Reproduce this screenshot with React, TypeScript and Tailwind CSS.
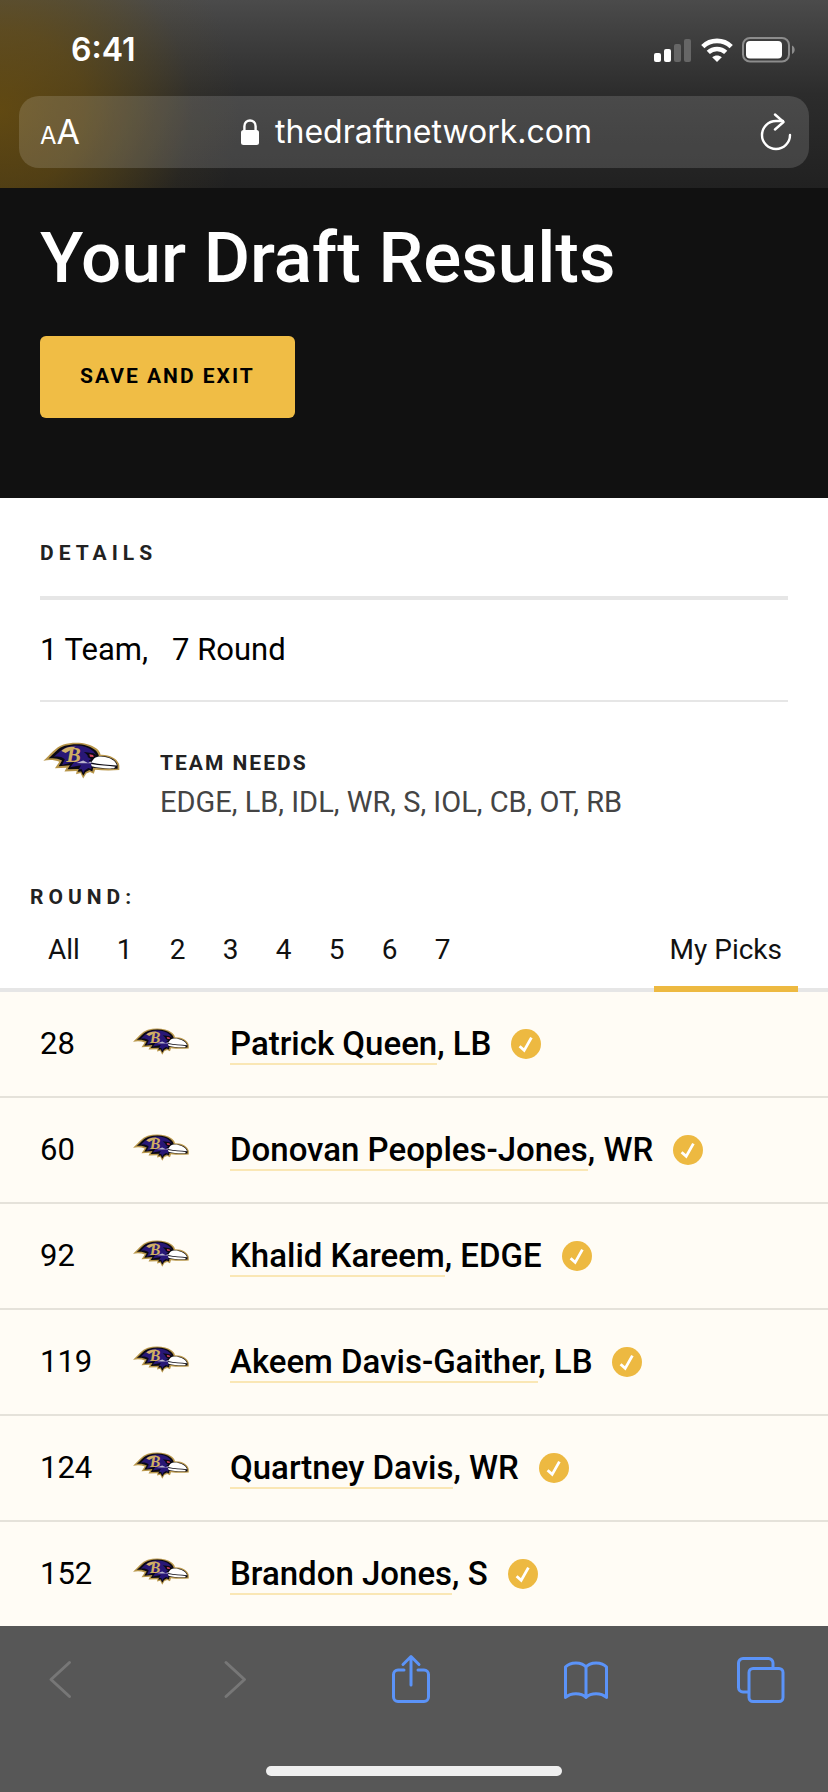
import React from "react";

type Pick = { pick: number; name: string; position: string };

const picks: Pick[] = [
  { pick: 28, name: "Patrick Queen", position: "LB" },
  { pick: 60, name: "Donovan Peoples-Jones", position: "WR" },
  { pick: 92, name: "Khalid Kareem", position: "EDGE" },
  { pick: 119, name: "Akeem Davis-Gaither", position: "LB" },
  { pick: 124, name: "Quartney Davis", position: "WR" },
  { pick: 152, name: "Brandon Jones", position: "S" },
];

const rounds = ["1", "2", "3", "4", "5", "6", "7"];

function RavenLogo({ className }: { className: string }) {
  return (
    <svg viewBox="0 0 226 108" className={className} role="img" aria-label="Baltimore Ravens">
      <path
        d="M1 55C22 36 36 15 60 7C92-2 134 1 157 19C165 25 168 32 169 37C197 36 221 50 224 68L224 82C200 84 176 84 153 81L149 93L138 88L127 92L118 107L110 91L97 94L99 85L63 86L69 75L35 77L48 58C34 52 18 51 1 55Z"
        fill="#b8964a"
      />
      <path
        d="M16 48C34 33 44 17 64 11C96 2 131 5 153 23C160 29 163 36 164 41C194 40 216 52 219 69L219 78C196 79 172 78 147 75L145 86L136 82L125 88L118 99L112 86L102 87L105 79L72 80L79 68L46 71L56 54C42 47 30 46 16 48Z"
        fill="#0b0912"
      />
      <path
        d="M32 43C46 31 54 20 70 15C98 6 128 10 148 27L158 40L140 37L130 43L142 50L134 54L142 60L142 79L133 76L122 83L118 91L114 80L105 80L112 68L80 74L92 58L56 67L64 50C54 42 44 41 32 43Z"
        fill="#281776"
      />
      <path d="M98 61L118 54L132 61L140 57L142 62L114 62Z" fill="#b9b4cc" />
      <path d="M120 29L148 33L162 41L150 47L134 44L128 36Z" fill="#0b0912" />
      <path d="M136 36L147 38L149 44L138 43Z" fill="#d8475e" />
      <path d="M150 48C158 42 170 41 182 44C202 48 214 57 217 69C192 66 168 66 141 60Z" fill="#ffffff" />
      <path d="M141 64C168 69 190 69 213 72L208 77C186 78 162 76 143 71Z" fill="#ffffff" />
      <path d="M54 26C66 15 76 13 96 14L84 22L66 32Z" fill="#d2b26a" />
      <text
        x="68"
        y="58"
        fontFamily="Liberation Serif, serif"
        fontSize="64"
        fontWeight="700"
        fontStyle="italic"
        fill="#cfae62"
      >
        B
      </text>
    </svg>
  );
}

function CheckBadge() {
  return (
    <svg viewBox="0 0 30 30" className="size-[30px] shrink-0" role="img" aria-label="Your pick">
      <circle cx="15" cy="15" r="15" fill="#edb941" />
      <path d="M8.6 17.2L13.2 21.4L20.4 8.6" fill="none" stroke="#fff" strokeWidth="2.8" />
    </svg>
  );
}

function StatusBar() {
  return (
    <div className="flex h-24 items-center justify-between pt-1 pr-8 pl-[71px]">
      <span className="text-[32px] leading-10 font-semibold">6:41</span>
      <div className="flex items-center gap-[9px]">
        <svg viewBox="0 0 38 24" className="h-6 w-[38px]" aria-hidden="true">
          <rect x="0" y="15" width="7" height="9" rx="2" fill="#fff" />
          <rect x="10" y="11" width="7" height="13" rx="2" fill="#fff" />
          <rect x="20" y="6" width="7" height="18" rx="2" fill="#666" />
          <rect x="30" y="1" width="7" height="23" rx="2" fill="#666" />
        </svg>
        <svg viewBox="0 0 32 24" className="h-6 w-8" aria-hidden="true" fill="none" stroke="#fff" strokeWidth="4.6">
          <path d="M1.8 8.6C9.6 0.9 22.4 0.9 30.2 8.6" />
          <path d="M7.3 14.4C12.2 9.8 19.8 9.8 24.7 14.4" />
          <path d="M16 24L11.2 19.2C14 17 18 17 20.8 19.2Z" fill="#fff" stroke="none" />
        </svg>
        <svg viewBox="0 0 54 26" className="h-[26px] w-[54px]" aria-hidden="true">
          <rect x="1" y="1" width="46" height="23.5" rx="7" fill="none" stroke="#8c8c8c" strokeWidth="2" />
          <rect x="4" y="4" width="36" height="17.5" rx="4" fill="#fff" />
          <path d="M50 8.6C53.6 10.2 53.6 15.4 50 17Z" fill="#8c8c8c" />
        </svg>
      </div>
    </div>
  );
}

function BrowserHeader() {
  return (
    <header className="bg-linear-to-b from-[#4b4b4b] via-[#2c2c2c] via-50% to-[#212121] font-[Inter,sans-serif] text-white">
      <div className="bg-[radial-gradient(ellipse_240px_230px_at_0px_110px,rgba(120,86,8,0.7)_0%,rgba(112,82,12,0.6)_35%,rgba(104,80,18,0.42)_55%,rgba(96,78,30,0.1)_80%,transparent_100%)] pb-5">
        <StatusBar />
        <div className="mx-[19px] flex h-[72px] items-center justify-between rounded-[20px] bg-white/[0.14] pr-4 pl-[21px]">
          <button type="button" aria-label="Page settings" className="flex w-12 items-baseline pt-1">
            <span className="text-2xl leading-10">A</span>
            <span className="text-[34px] leading-10">A</span>
          </button>
          <button type="button" className="flex items-center gap-4">
            <svg viewBox="0 0 18 26" className="h-[26px] w-[18px]" aria-hidden="true">
              <rect x="0" y="11" width="18" height="15" rx="2.5" fill="#fff" />
              <path d="M3.4 12V7.2C3.4-0.4 14.6-0.4 14.6 7.2V12" fill="none" stroke="#fff" strokeWidth="2.4" />
            </svg>
            <span className="text-[32px] leading-10">thedraftnetwork.com</span>
          </button>
          <button type="button" aria-label="Reload" className="flex w-12 justify-end">
            <svg viewBox="0 0 34 38" className="h-[38px] w-[34px]" fill="none" stroke="#fff" strokeWidth="2.4" strokeLinecap="round" strokeLinejoin="round" aria-hidden="true">
              <path d="M31 22A14 14 0 1 1 17 8H24" />
              <path d="M16 1.500L24.500 9L16 16.500" />
            </svg>
          </button>
        </div>
      </div>
    </header>
  );
}

function BrowserToolbar() {
  return (
    <footer className="flex flex-col items-center bg-[#575757] pt-7">
      <nav
        aria-label="Browser"
        className="flex w-full items-center justify-between pr-[42px] pl-[35px] text-[#5b93f8]"
      >
        <button type="button" aria-label="Back" disabled className="flex w-[50px] justify-center text-[#777]">
          <svg viewBox="0 0 30 50" className="h-[50px] w-[30px]" fill="none" stroke="currentColor" strokeWidth="3" strokeLinecap="round" strokeLinejoin="round" aria-hidden="true">
            <path d="M24.500 8.500L6 25.500L24.500 42.500" />
          </svg>
        </button>
        <button type="button" aria-label="Forward" disabled className="flex w-[50px] justify-center text-[#777]">
          <svg viewBox="0 0 30 50" className="h-[50px] w-[30px]" fill="none" stroke="currentColor" strokeWidth="3" strokeLinecap="round" strokeLinejoin="round" aria-hidden="true">
            <path d="M6 8.500L24.500 25.500L6 42.500" />
          </svg>
        </button>
        <button type="button" aria-label="Share" className="flex w-[50px] justify-center">
          <svg viewBox="0 0 40 50" className="h-[50px] w-10" fill="none" stroke="currentColor" strokeWidth="3" strokeLinecap="round" strokeLinejoin="round" aria-hidden="true">
            <path d="M13 16H7A4.500 4.500 0 0 0 2.500 20.500V43A4.500 4.500 0 0 0 7 47.500H33A4.500 4.500 0 0 0 37.500 43V20.500A4.500 4.500 0 0 0 33 16H27" />
            <path d="M20 31V3M12 10.500L20 2.500L28 10.500" />
          </svg>
        </button>
        <button type="button" aria-label="Bookmarks" className="flex w-[50px] justify-center">
          <svg viewBox="0 0 46 50" className="h-[50px] w-[46px]" fill="none" stroke="currentColor" strokeWidth="3" strokeLinecap="round" strokeLinejoin="round" aria-hidden="true">
            <path d="M23 13C19 7.500 7 7.500 2.500 13V43.500C8 38.500 18 38.500 23 43.500C28 38.500 38 38.500 43.500 43.500V13C39 7.500 27 7.500 23 13ZM23 13V43" />
          </svg>
        </button>
        <button type="button" aria-label="Tabs" className="flex w-[50px] justify-center">
          <svg viewBox="0 0 48 50" className="h-[50px] w-12" fill="none" stroke="currentColor" strokeWidth="3" aria-hidden="true">
            <rect x="12" y="14.500" width="34" height="33" rx="4" />
            <path d="M36 14V9A4.500 4.500 0 0 0 31.500 4.500H6A4.500 4.500 0 0 0 1.500 9V33.500A4.500 4.500 0 0 0 6 38H12" />
          </svg>
        </button>
      </nav>
      <div className="mt-[62px] mb-4 h-[10px] w-[296px] rounded-full bg-[#efefef]" />
    </footer>
  );
}

function RoundTabs() {
  return (
    <nav
      aria-label="Round"
      className="flex justify-between border-b-4 border-[#e6e6e6] px-[30px] text-[28px] leading-9 text-[#111]"
    >
      <div className="flex">
        <button type="button" className="w-[68px] pb-5">
          All
        </button>
        {rounds.map((r) => (
          <button key={r} type="button" className="w-[53px] pb-5">
            {r}
          </button>
        ))}
      </div>
      <button type="button" aria-current="page" className="-mb-1 border-b-6 border-[#edb941] px-4 pb-[18px]">
        My Picks
      </button>
    </nav>
  );
}

export default function App() {
  return (
    <div className="flex min-h-screen flex-col bg-white font-[Roboto,sans-serif] text-black">
      <BrowserHeader />
      <main className="flex-1">
        <section className="bg-[#111] px-10 pt-7 pb-20 text-white">
          <h1 className="text-[71px] leading-[84px] font-medium">Your Draft Results</h1>
          <button
            type="button"
            className="mt-9 h-[82px] rounded-md bg-[#f0bd45] px-10 text-[21px] font-bold tracking-[2px] text-black"
          >
            SAVE AND EXIT
          </button>
        </section>

        <section className="px-10 pt-10">
          <h2 className="border-b-4 border-[#e6e6e6] pb-7 text-[21px] leading-[30px] font-bold tracking-[5px] text-[#222]">
            DETAILS
          </h2>
          <p className="flex gap-6 border-b-2 border-[#e6e6e6] py-8 text-[31px] leading-9">
            <span>1 Team,</span>
            <span>7 Round</span>
          </p>
          <div className="flex pt-10">
            <RavenLogo className="mx-[3px] h-[37px] w-[77px] shrink-0" />
            <div className="ml-[37px]">
              <h3 className="pt-1 text-[21px] leading-[34px] font-bold tracking-[2px] text-[#222]">TEAM NEEDS</h3>
              <p className="pt-1 text-[29px] leading-9 text-[#444]">EDGE, LB, IDL, WR, S, IOL, CB, OT, RB</p>
            </div>
          </div>
        </section>

        <section className="pt-[62px]">
          <h2 className="px-[30px] pb-5 text-[21px] leading-[30px] font-bold tracking-[5px] text-[#222]">ROUND:</h2>
          <RoundTabs />
          <table className="w-full border-separate border-spacing-0 bg-[#fffcf5]">
            <tbody>
              {picks.map((p) => (
                <tr
                  key={p.pick}
                  className="h-[106px] last:h-[104px] *:border-b-2 *:border-[#e5e2da] last:*:border-b-0"
                >
                  <td className="w-[132px] pl-10 text-[31px] leading-10">{p.pick}</td>
                  <td className="w-[98px]">
                    <RavenLogo className="mb-[6px] h-[27px] w-[58px]" />
                  </td>
                  <td>
                    <div className="flex items-center gap-5 text-[33px] leading-10 font-medium">
                      <span>
                        <a href="#player" className="border-b-2 border-[#fae7b5]">
                          {p.name}
                        </a>
                        , {p.position}
                      </span>
                      <CheckBadge />
                    </div>
                  </td>
                </tr>
              ))}
            </tbody>
          </table>
        </section>
      </main>
      <BrowserToolbar />
    </div>
  );
}
